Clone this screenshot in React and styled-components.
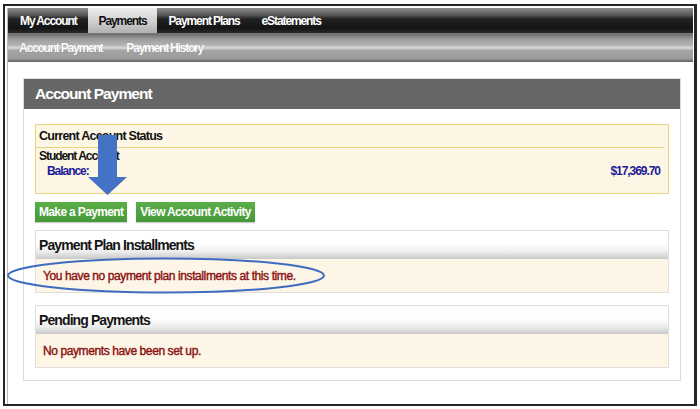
import React from 'react';
import styled, { createGlobalStyle } from 'styled-components';

const GlobalStyle = createGlobalStyle`
  html, body {
    margin: 0;
    padding: 0;
    background: #fff;
  }
  body {
    font-family: "Liberation Sans", Arial, sans-serif;
  }
`;

const Page = styled.div`
  position: relative;
  width: 700px;
  height: 409px;
  padding: 4px 0 0 3px;
  box-sizing: border-box;
`;

const Frame = styled.div`
  width: 694px;
  height: 402px;
  box-sizing: border-box;
  border: 2px solid #262626;
  border-right-width: 3px;
  padding: 2px 1px 0 2px;
  display: flex;
  flex-direction: column;
`;

const Inner = styled.div`
  flex: 1;
  border-left: 1px solid #b5b5b5;
  display: flex;
  flex-direction: column;
`;

const TopNav = styled.nav`
  display: flex;
  height: 25px;
  padding-left: 1px;
  background: linear-gradient(#8c8c8c 0%, #575757 28%, #222 44%, #141414 80%, #2a2a2a 100%);
  border-bottom: 1px solid #777;
`;

const Tab = styled.div`
  display: flex;
  align-items: center;
  padding: 0 11px;
  font-size: 12px;
  font-weight: bold;
  letter-spacing: -1.1px;
  color: ${p => (p.$active ? '#111' : '#fff')};
  background: ${p => (p.$active ? 'linear-gradient(#ececec, #cfcfcf 55%, #b0b0b0)' : 'transparent')};
`;

const SubNav = styled.nav`
  display: flex;
  gap: 24px;
  align-items: center;
  height: 28px;
  padding-left: 11px;
  background: linear-gradient(#6c6c6c 0%, #9c9c9c 18%, #b4b4b4 40%, #dcdcdc 50%, #a6a6a6 58%, #9a9a9a 88%, #5e5e5e 100%);
`;

const SubLink = styled.span`
  font-size: 12px;
  font-weight: bold;
  letter-spacing: -1.2px;
  color: #fff;
  text-shadow: 0 0 1px rgba(0, 0, 0, 0.35);
`;

const Content = styled.div`
  flex: 1;
  padding: 16px 12px 0 15px;
`;

const Panel = styled.section`
  border: 1px solid #dcdcdc;
  padding-bottom: 12px;
`;

const PanelHeader = styled.h1`
  margin: 0;
  height: 30px;
  display: flex;
  align-items: center;
  padding-left: 11px;
  background: #666;
  color: #fff;
  font-size: 15.5px;
  font-weight: bold;
  letter-spacing: -0.95px;
`;

const PanelBody = styled.div`
  padding: 15px 11px 0 11px;
`;

const StatusBox = styled.div`
  border: 1px solid #e6d57e;
  background: #fdf6e4;
  height: 70px;
  box-sizing: border-box;
`;

const StatusTitle = styled.div`
  height: 22px;
  display: flex;
  align-items: center;
  padding-left: 3px;
  font-size: 12.5px;
  font-weight: bold;
  letter-spacing: -0.75px;
  color: #111;
  border-bottom: 1px solid #e6d57e;
  margin-right: 4px;
`;

const StatusRow = styled.div`
  display: flex;
  justify-content: space-between;
  align-items: center;
  height: 15px;
  padding-left: ${p => p.$indent || 3}px;
  padding-right: 8px;
  font-size: 12px;
  font-weight: bold;
  letter-spacing: -1.05px;
  color: ${p => p.$color || '#111'};
  &:first-of-type {
    margin-top: 3px;
  }
`;

const Buttons = styled.div`
  display: flex;
  gap: 9px;
  margin-top: 8px;
`;

const GreenButton = styled.button`
  height: 20px;
  padding: 0 4px;
  border: none;
  background: linear-gradient(#5cae48, #46983a);
  color: #fff;
  font-family: inherit;
  font-size: 12px;
  font-weight: bold;
  letter-spacing: -0.65px;
  box-shadow: 0 1px 1px rgba(0, 0, 0, 0.2);
`;

const InfoBox = styled.div`
  margin-top: ${p => p.$top}px;
  border: 1px solid #dedede;
`;

const InfoHeader = styled.h2`
  margin: 0;
  height: 28px;
  display: flex;
  align-items: center;
  padding-left: 3px;
  font-size: 14px;
  font-weight: bold;
  letter-spacing: -0.9px;
  color: #141414;
  background: linear-gradient(#fff 0%, #fff 45%, #ececec 75%, #c8c8c8 100%);
`;

const InfoBody = styled.div`
  height: 33px;
  display: flex;
  align-items: center;
  padding-left: 7px;
  background: #fdf6e6;
  color: #8a1212;
  font-size: 12px;
  letter-spacing: -0.4px;
  -webkit-text-stroke: 0.4px #8a1212;
`;

const Overlay = styled.svg`
  position: absolute;
  left: 0;
  top: 0;
  pointer-events: none;
`;

export default function App() {
  return (
    <>
      <GlobalStyle />
      <Page>
        <Frame>
          <Inner>
            <TopNav>
              <Tab>My Account</Tab>
              <Tab $active>Payments</Tab>
              <Tab>Payment Plans</Tab>
              <Tab>eStatements</Tab>
            </TopNav>
            <SubNav>
              <SubLink>Account Payment</SubLink>
              <SubLink>Payment History</SubLink>
            </SubNav>
            <Content>
              <Panel>
                <PanelHeader>Account Payment</PanelHeader>
                <PanelBody>
                  <StatusBox>
                    <StatusTitle>Current Account Status</StatusTitle>
                    <StatusRow>Student Account</StatusRow>
                    <StatusRow $indent={11} $color="#1b1b9a">
                      <span>Balance:</span>
                      <span>$17,369.70</span>
                    </StatusRow>
                  </StatusBox>
                  <Buttons>
                    <GreenButton>Make a Payment</GreenButton>
                    <GreenButton>View Account Activity</GreenButton>
                  </Buttons>
                  <InfoBox $top={8}>
                    <InfoHeader>Payment Plan Installments</InfoHeader>
                    <InfoBody>You have no payment plan installments at this time.</InfoBody>
                  </InfoBox>
                  <InfoBox $top={12}>
                    <InfoHeader>Pending Payments</InfoHeader>
                    <InfoBody>No payments have been set up.</InfoBody>
                  </InfoBox>
                </PanelBody>
              </Panel>
            </Content>
          </Inner>
        </Frame>
        <Overlay width="700" height="409" viewBox="0 0 700 409">
          <path d="M98 135 H117 V177 H127 L107.5 195 L88 177 H98 Z" fill="#4472c4" />
          <ellipse cx="166" cy="275.5" rx="158" ry="17" fill="none" stroke="#3f6cc0" strokeWidth="2" />
        </Overlay>
      </Page>
    </>
  );
}
